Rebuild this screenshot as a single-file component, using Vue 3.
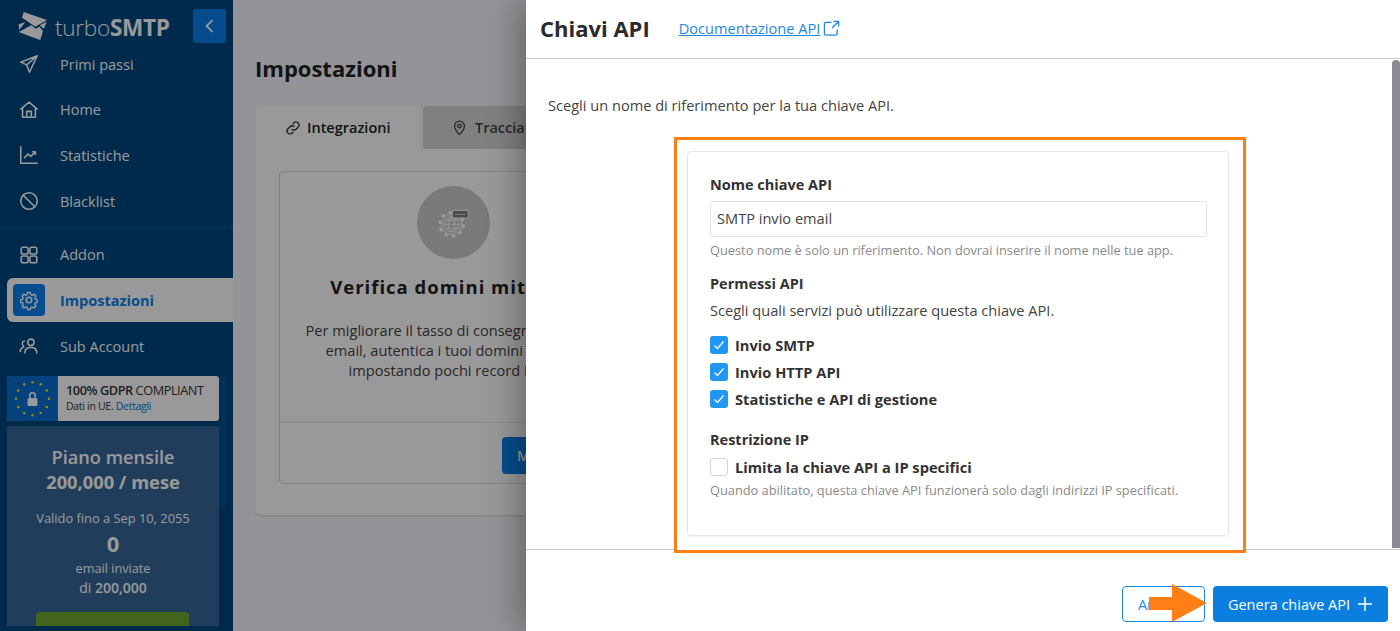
<template>
  <div class="page">
    <aside class="sidebar">
      <header class="brand">
        <svg class="brand-mark" viewBox="0 0 30 30" width="30" height="30">
          <path fill="#fff" d="M5.700 0 L29 8 L17.300 14.700 L4 5.700 Z" />
          <path fill="#fff" d="M29 9.500 L25.700 16.700 L21.800 13.300 Z" />
          <path fill="#fff" d="M.7 12.300 L7.300 10 L1.300 18 Z" />
          <path fill="#fff" d="M.7 20 L13.300 13.300 L18 16.700 L21.300 14.500 L25 19 L22.300 28 L13 24.700 Z" />
        </svg>
        <span class="brand-name">turbo<b>SMTP</b></span>
        <button class="collapse">
          <svg viewBox="0 0 24 24" width="20" height="20"><path d="M15 5l-7 7 7 7" fill="none" stroke="#fff" stroke-width="2.200" /></svg>
        </button>
      </header>

      <nav class="menu">
        <a v-for="item in topMenu" :key="item.label" class="menu-item">
          <span class="menu-icon"><svg viewBox="0 0 24 24" width="22" height="22" v-html="item.icon"></svg></span>
          <span>{{ item.label }}</span>
        </a>
      </nav>
      <div class="menu-divider"></div>
      <nav class="menu">
        <a v-for="item in bottomMenu" :key="item.label" class="menu-item" :class="{ active: item.active }">
          <span class="menu-icon"><svg viewBox="0 0 24 24" width="22" height="22" v-html="item.icon"></svg></span>
          <span>{{ item.label }}</span>
        </a>
      </nav>

      <div class="sidebar-scroll">
        <div class="gdpr">
          <div class="gdpr-flag">
            <svg viewBox="0 0 51 46" width="51" height="46">
              <circle v-for="s in euStars" :key="s.x" :cx="s.x" :cy="s.y" r="1.300" fill="#ffe600" />
              <rect x="20.500" y="22" width="10" height="8" rx="1.500" fill="#fff" />
              <path d="M22.800 22v-2.500a2.700 2.700 0 0 1 5.400 0V22" fill="none" stroke="#fff" stroke-width="1.500" />
            </svg>
          </div>
          <div class="gdpr-text">
            <div class="gdpr-title"><b>100% GDPR</b> COMPLIANT</div>
            <div class="gdpr-sub">Dati in UE. <span>Dettagli</span></div>
          </div>
        </div>

        <div class="plan">
          <div class="plan-name">Piano mensile</div>
          <div class="plan-volume">200,000 / mese</div>
          <div class="plan-valid">Valido fino a Sep 10, 2055</div>
          <div class="plan-count">0</div>
          <div class="plan-line">email inviate</div>
          <div class="plan-line plan-total">di <b>200,000</b></div>
          <button class="plan-btn">Aggiorna piano</button>
        </div>
      </div>
      <div class="side-thumb"></div>
    </aside>

    <main class="content">
      <h1>Impostazioni</h1>
      <div class="tabs">
        <div class="tab active">
          <svg viewBox="0 0 24 24" width="16" height="16" fill="none" stroke="#333" stroke-width="2"><path d="M10 14a4.500 4.500 0 0 0 6.400 0l3.200-3.200a4.500 4.500 0 0 0-6.400-6.400L11.500 6" /><path d="M14 10a4.500 4.500 0 0 0-6.400 0l-3.200 3.200a4.500 4.500 0 0 0 6.400 6.400L12.500 18" /></svg>
          Integrazioni
        </div>
        <div class="tab second">
          <svg viewBox="0 0 24 24" width="17" height="17" fill="none" stroke="#444" stroke-width="1.800"><path d="M12 22s-7-6.500-7-12a7 7 0 0 1 14 0c0 5.500-7 12-7 12z" /><circle cx="12" cy="10" r="2.500" /></svg>
          Tracciamento
        </div>
      </div>
      <section class="tab-card">
        <div class="feature">
          <div class="feature-body">
            <div class="feature-circle">
              <svg viewBox="0 0 36 36" width="33" height="33" fill="none" stroke="#fff" stroke-width="1">
                <circle cx="16" cy="20" r="8" />
                <ellipse cx="16" cy="20" rx="3.500" ry="8" />
                <path d="M8 20h16M9.500 15.500h13M9.500 24.500h13" />
                <circle cx="16" cy="20" r="11" stroke-width="1" />
                <circle cx="16" cy="20" r="13" stroke-width="3" stroke-dasharray="4 4.170" />
                <rect x="17" y="5" width="17" height="8" fill="#7a7a7a" stroke="#fff" />
                <path d="M20 9h11" stroke-dasharray="2 1" />
              </svg>
            </div>
            <h2>Verifica domini mittenti</h2>
            <p>Per migliorare il tasso di consegna delle tue<br />email, autentica i tuoi domini mittenti<br />impostando pochi record DNS.</p>
          </div>
          <div class="feature-foot">
            <button class="feature-btn">Modifica</button>
          </div>
        </div>
      </section>
    </main>

    <div class="overlay"></div>

    <section class="panel">
      <header class="panel-head">
        <h3>Chiavi API</h3>
        <a class="doc-link">Documentazione API</a>
        <svg viewBox="0 0 18 18" width="17" height="17" fill="none" stroke="#1e88e5" stroke-width="1.400"><path d="M9 2.500H3a1.500 1.500 0 0 0-1.500 1.500v10.500A1.500 1.500 0 0 0 3 16h10.500a1.500 1.500 0 0 0 1.500-1.500V10" /><path d="M11 1.500h5.500V7M16.500 1.500L9.500 8.500" /></svg>
      </header>

      <div class="panel-body">
        <p class="intro">Scegli un nome di riferimento per la tua chiave API.</p>
        <div class="frame">
          <div class="form-card">
            <label class="field-label">Nome chiave API</label>
            <input class="field-input" type="text" value="SMTP invio email" />
            <div class="hint">Questo nome è solo un riferimento. Non dovrai inserire il nome nelle tue app.</div>

            <div class="field-label perm">Permessi API</div>
            <div class="perm-sub">Scegli quali servizi può utilizzare questa chiave API.</div>
            <div class="check-list">
              <div v-for="c in perms" :key="c" class="check-row">
                <span class="check on">
                  <svg viewBox="0 0 18 18" width="18" height="18"><path d="M4.500 9.500l3 3 6-7" fill="none" stroke="#fff" stroke-width="1.200" /></svg>
                </span>
                {{ c }}
              </div>
            </div>

            <div class="field-label restr">Restrizione IP</div>
            <div class="check-row">
              <span class="check"></span>
              Limita la chiave API a IP specifici
            </div>
            <div class="hint hint-ip">Quando abilitato, questa chiave API funzionerà solo dagli indirizzi IP specificati.</div>
          </div>
        </div>
        <div class="panel-thumb"></div>
      </div>

      <footer class="panel-foot">
        <button class="btn-outline">Annulla</button>
        <button class="btn-primary">
          Genera chiave API
          <svg viewBox="0 0 16 16" width="16" height="16"><path d="M8 1v14M1 8h14" stroke="#fff" stroke-width="1.500" /></svg>
        </button>
        <svg class="arrow" viewBox="0 0 58 38" width="58" height="38"><path d="M0 13h23V0l35 19-35 19V26H0z" fill="#ff7f17" /></svg>
      </footer>
    </section>
  </div>
</template>

<script setup>
const line = 'fill="none" stroke="#fff" stroke-width="1.700" stroke-linejoin="round" stroke-linecap="round"'

const topMenu = [
  { label: 'Primi passi', icon: `<path ${line} d="M21 3L3 10l6.500 3 3 8L21 3zM9.500 13L21 3" />` },
  { label: 'Home', icon: `<path ${line} d="M3 11l9-7.500 9 7.500M5 9.500V20h14V9.500M9.500 20v-6.500h5V20" />` },
  { label: 'Statistiche', icon: `<path ${line} d="M3 3v18h18M7 15l4-4 3 2.500 5-5M16 8.500h3v3" />` },
  { label: 'Blacklist', icon: `<circle ${line} cx="12" cy="12" r="9" /><path ${line} d="M5.700 5.700l12.600 12.600" />` },
]

const bottomMenu = [
  { label: 'Addon', icon: `<rect ${line} x="3.500" y="3.500" width="7.500" height="7.500" rx="2" /><rect ${line} x="13" y="3.500" width="7.500" height="7.500" rx="2" /><rect ${line} x="3.500" y="13" width="7.500" height="7.500" rx="2" /><rect ${line} x="13" y="13" width="7.500" height="7.500" rx="2" />` },
  { label: 'Impostazioni', active: true, icon: `<circle ${line} cx="12" cy="12" r="3" /><path ${line} d="M10.300 3h3.400l.5 2.600 1.700.7 2.200-1.500 2.400 2.400-1.500 2.200.7 1.700 2.300.5v3.400l-2.300.5-.7 1.700 1.500 2.200-2.400 2.400-2.200-1.500-1.700.7-.5 2.600h-3.400l-.5-2.600-1.700-.7-2.200 1.500-2.400-2.400 1.500-2.200-.7-1.700-2.300-.5v-3.400l2.300-.5.7-1.700-1.500-2.200 2.400-2.400 2.200 1.500 1.700-.7z" transform="translate(1.200 1.200) scale(.9)" />` },
  { label: 'Sub Account', icon: `<circle ${line} cx="14" cy="8" r="3.500" /><path ${line} d="M7.500 19.500c0-4 3-6 6.500-6s6.500 2 6.500 6M7 6.500a3 3 0 0 0-1 5.500M2.500 18c0-3 1.500-4.500 4-5" />` },
]

const perms = ['Invio SMTP', 'Invio HTTP API', 'Statistiche e API di gestione']

const euStars = Array.from({ length: 12 }, (_, i) => {
  const a = (i * Math.PI) / 6
  return { x: 25.5 + Math.cos(a) * 16.5, y: 22.7 + Math.sin(a) * 16.5 }
})
</script>

<style>
html, body { margin: 0; height: 100%; overflow: hidden; }
</style>

<style scoped>
.page { position: relative; display: flex; width: 1400px; height: 631px; overflow: hidden; font-family: "Open Sans", "Liberation Sans", sans-serif; color: #333; background: #f3f7fc; }

/* sidebar */
.sidebar { position: relative; width: 233px; flex: none; height: 631px; overflow: hidden; background: #00477f; color: #fff; }
.brand { display: flex; align-items: flex-start; height: 41.500px; padding: 12px 7px 0 18px; box-sizing: border-box; position: relative; }
.brand-mark { flex: none; }
.brand-name { margin-left: 7px; margin-top: 2px; font-size: 22.600px; line-height: 28px; font-weight: 300; letter-spacing: -.3px; }
.brand-name b { font-weight: 700; }
.collapse { position: absolute; left: 193px; top: 9px; width: 33px; height: 34px; padding: 0; border: 0; border-radius: 3px; background: #0a7fea; display: flex; align-items: center; justify-content: center; }
.menu-item { display: flex; align-items: center; height: 45.600px; padding-left: 18px; font-size: 14.500px; color: #fff; }
.menu-icon { width: 22px; height: 22px; margin-right: 20px; display: flex; }
.menu-divider { height: 1px; margin: 3px 0 4px; background: #0a5a96; }
.menu-item.active { height: 44px; margin: 1px 0 .75px 7px; padding-left: 6px; background: #fff; border-radius: 6px 0 0 6px; color: #0a7fea; font-weight: 700; }
.menu-item.active .menu-icon { width: 32px; height: 32px; margin-right: 15px; border-radius: 4px; background: #0a7fea; align-items: center; justify-content: center; }
.sidebar-scroll { padding: 7px 14px 0 7px; position: relative; z-index: 1; }
.gdpr { display: flex; height: 45px; border-radius: 3px; overflow: hidden; background: #fff; color: #333; }
.gdpr-flag { width: 51px; flex: none; background: #0a6fd0; }
.gdpr-text { padding: 6px 0 0 8px; }
.gdpr-title { font-size: 12.750px; line-height: 17px; letter-spacing: -.45px; white-space: nowrap; }
.gdpr-title b { font-weight: 600; }
.gdpr-sub { font-size: 10.500px; line-height: 15px; letter-spacing: -.3px; }
.gdpr-sub span { color: #0a6fd0; }
.plan { margin-top: 5px; height: 200px; padding-top: 19px; box-sizing: border-box; border-radius: 3px 3px 0 0; background: #36679a; text-align: center; color: #fff; overflow: hidden; }
.plan-name { font-size: 18.200px; line-height: 24px; font-weight: 600; }
.plan-volume { font-size: 18.300px; line-height: 25px; font-weight: 700; }
.plan-valid { margin-top: 12px; font-size: 12.850px; line-height: 24px; }
.plan-count { margin-top: -1px; font-size: 22px; line-height: 28px; font-weight: 700; }
.plan-line { margin-top: 1px; font-size: 12.700px; line-height: 20px; }
.plan-total { margin-top: 0; font-size: 14px; }
.plan-total b { font-weight: 600; }
.plan-btn { display: block; width: 153px; height: 40px; margin: 14px auto 0 29px; border: 0; border-radius: 4px; background: #6fa92e; color: #fff; font: 600 14px "Open Sans", sans-serif; }
.side-thumb { position: absolute; left: 219px; top: 376px; width: 7px; height: 131px; background: #004f92; }

/* main behind the overlay */
.content { flex: none; width: 396px; padding: 0 0 0 22px; box-sizing: content-box; }
.content h1 { margin: 53px 0 23px; font-size: 22px; line-height: 30px; font-weight: 700; color: #222; }
.tabs { display: flex; gap: 3px; padding-left: 1px; }
.tab { display: flex; align-items: center; gap: 6px; width: 164px; height: 43px; padding-left: 29px; box-sizing: border-box; border-radius: 4px 4px 0 0; font-size: 14.500px; font-weight: 600; background: #d6d6d6; color: #444; white-space: nowrap; }
.tab.active { background: #fff; color: #222; }
.tab.second { gap: 7px; padding-left: 28px; }
.tab-card { height: 366px; padding: 22px 24px 31px; box-sizing: border-box; background: #fff; border-radius: 0 0 6px 6px; box-shadow: 0 1px 2px rgba(0, 0, 0, .15); }
.feature { width: 348px; height: 313px; box-sizing: border-box; display: flex; flex-direction: column; border: 1px solid #ddd; border-radius: 4px; }
.feature-body { flex: 1; padding-top: 14px; text-align: center; }
.feature-circle { width: 73px; height: 73px; margin: 0 auto; border-radius: 50%; background: #cbcbcb; display: flex; align-items: center; justify-content: center; }
.feature-body h2 { margin: 14px 0 0; font-size: 18.500px; line-height: 28px; font-weight: 700; letter-spacing: 1px; color: #222; white-space: nowrap; }
.feature-body p { margin: 19px 0 0; font-size: 14.600px; line-height: 20px; color: #444; white-space: nowrap; }
.feature-foot { height: 61px; padding: 14px 0 0 222px; box-sizing: border-box; border-top: 1px solid #e5e5e5; }
.feature-btn { width: 90px; height: 37px; border: 0; border-radius: 4px; background: #0a7fea; color: #fff; font: 600 14px "Open Sans", sans-serif; text-align: left; padding-left: 15px; }

.overlay { position: absolute; inset: 0; background: rgba(0, 0, 0, .4); z-index: 10; }

/* side panel */
.panel { position: absolute; top: 0; right: 0; width: 874px; height: 631px; z-index: 20; display: flex; flex-direction: column; background: #fff; box-shadow: -8px 0 30px rgba(0, 0, 0, .3); }
.panel-head { display: flex; align-items: center; height: 59px; flex: none; box-sizing: border-box; padding: 0 0 2px 14px; border-bottom: 1px solid #c9c9c9; }
.panel-head h3 { margin: 0 29px 0 0; font-size: 22px; font-weight: 700; color: #2b2b2b; }
.doc-link { font-size: 14.600px; color: #1e88e5; text-decoration: underline; margin-right: 3px; }
.panel-body { position: relative; height: 490px; flex: none; box-sizing: border-box; padding: 36px 0 0 22px; }
.intro { margin: 0 0 22px; font-size: 14.600px; line-height: 20px; color: #444; }
.frame { width: 572px; height: 416px; margin-left: 126px; padding: 11px 14px 16px 10px; box-sizing: border-box; border: 3px solid #ff7f17; position: relative; z-index: 1; background: #fff; }
.form-card { height: 385px; box-sizing: border-box; padding: 23px 22px 0; border: 1px solid #e6e6e6; border-radius: 4px; box-shadow: 0 1px 2px rgba(0, 0, 0, .06); }
.field-label { display: block; font-size: 14.500px; line-height: 20px; font-weight: 700; color: #333; }
.field-input { display: block; width: 497px; height: 36px; margin-top: 6px; padding: 0 6px 2px; box-sizing: border-box; border: 1px solid #e2e2e2; border-radius: 3px; outline: none; font: 14.600px "Open Sans", sans-serif; color: #444; }
.hint { margin-top: 4px; font-size: 12.800px; line-height: 18px; color: #8a8a8a; }
.perm { margin-top: 15px; }
.perm-sub { margin-top: 6px; font-size: 14.600px; line-height: 20px; color: #444; }
.check-list { margin-top: 11px; }
.check-row { display: flex; align-items: center; gap: 7px; height: 27px; font-size: 14.650px; font-weight: 700; color: #333; }
.check { width: 18px; height: 18px; flex: none; box-sizing: border-box; border: 1px solid #d5d5d5; border-radius: 3px; }
.check.on { border: 0; background: #2196f3; display: flex; }
.restr { margin-top: 18px; margin-bottom: 3px; }
.hint-ip { margin-top: 1px; }
.panel-thumb { position: absolute; right: 0; top: 1px; width: 8px; height: 488px; background: #8a8a92; border-radius: 4px 4px 0 0; }
.panel-foot { position: relative; flex: 1; display: flex; justify-content: flex-end; align-items: flex-start; gap: 8px; padding: 36px 12px 0 0; border-top: 1px solid #c9c9c9; }
.btn-outline { width: 83px; height: 36px; border: 1px solid #1e88e5; border-radius: 4px; background: #fff; color: #1e88e5; font: 14.500px "Open Sans", sans-serif; }
.btn-primary { display: flex; align-items: center; justify-content: center; gap: 7px; width: 175px; height: 36px; padding: 0; border: 0; border-radius: 4px; background: #0a7fe0; color: #fff; font: 14.500px "Open Sans", sans-serif; }
.arrow { position: absolute; left: 623px; top: 34px; }
</style>
